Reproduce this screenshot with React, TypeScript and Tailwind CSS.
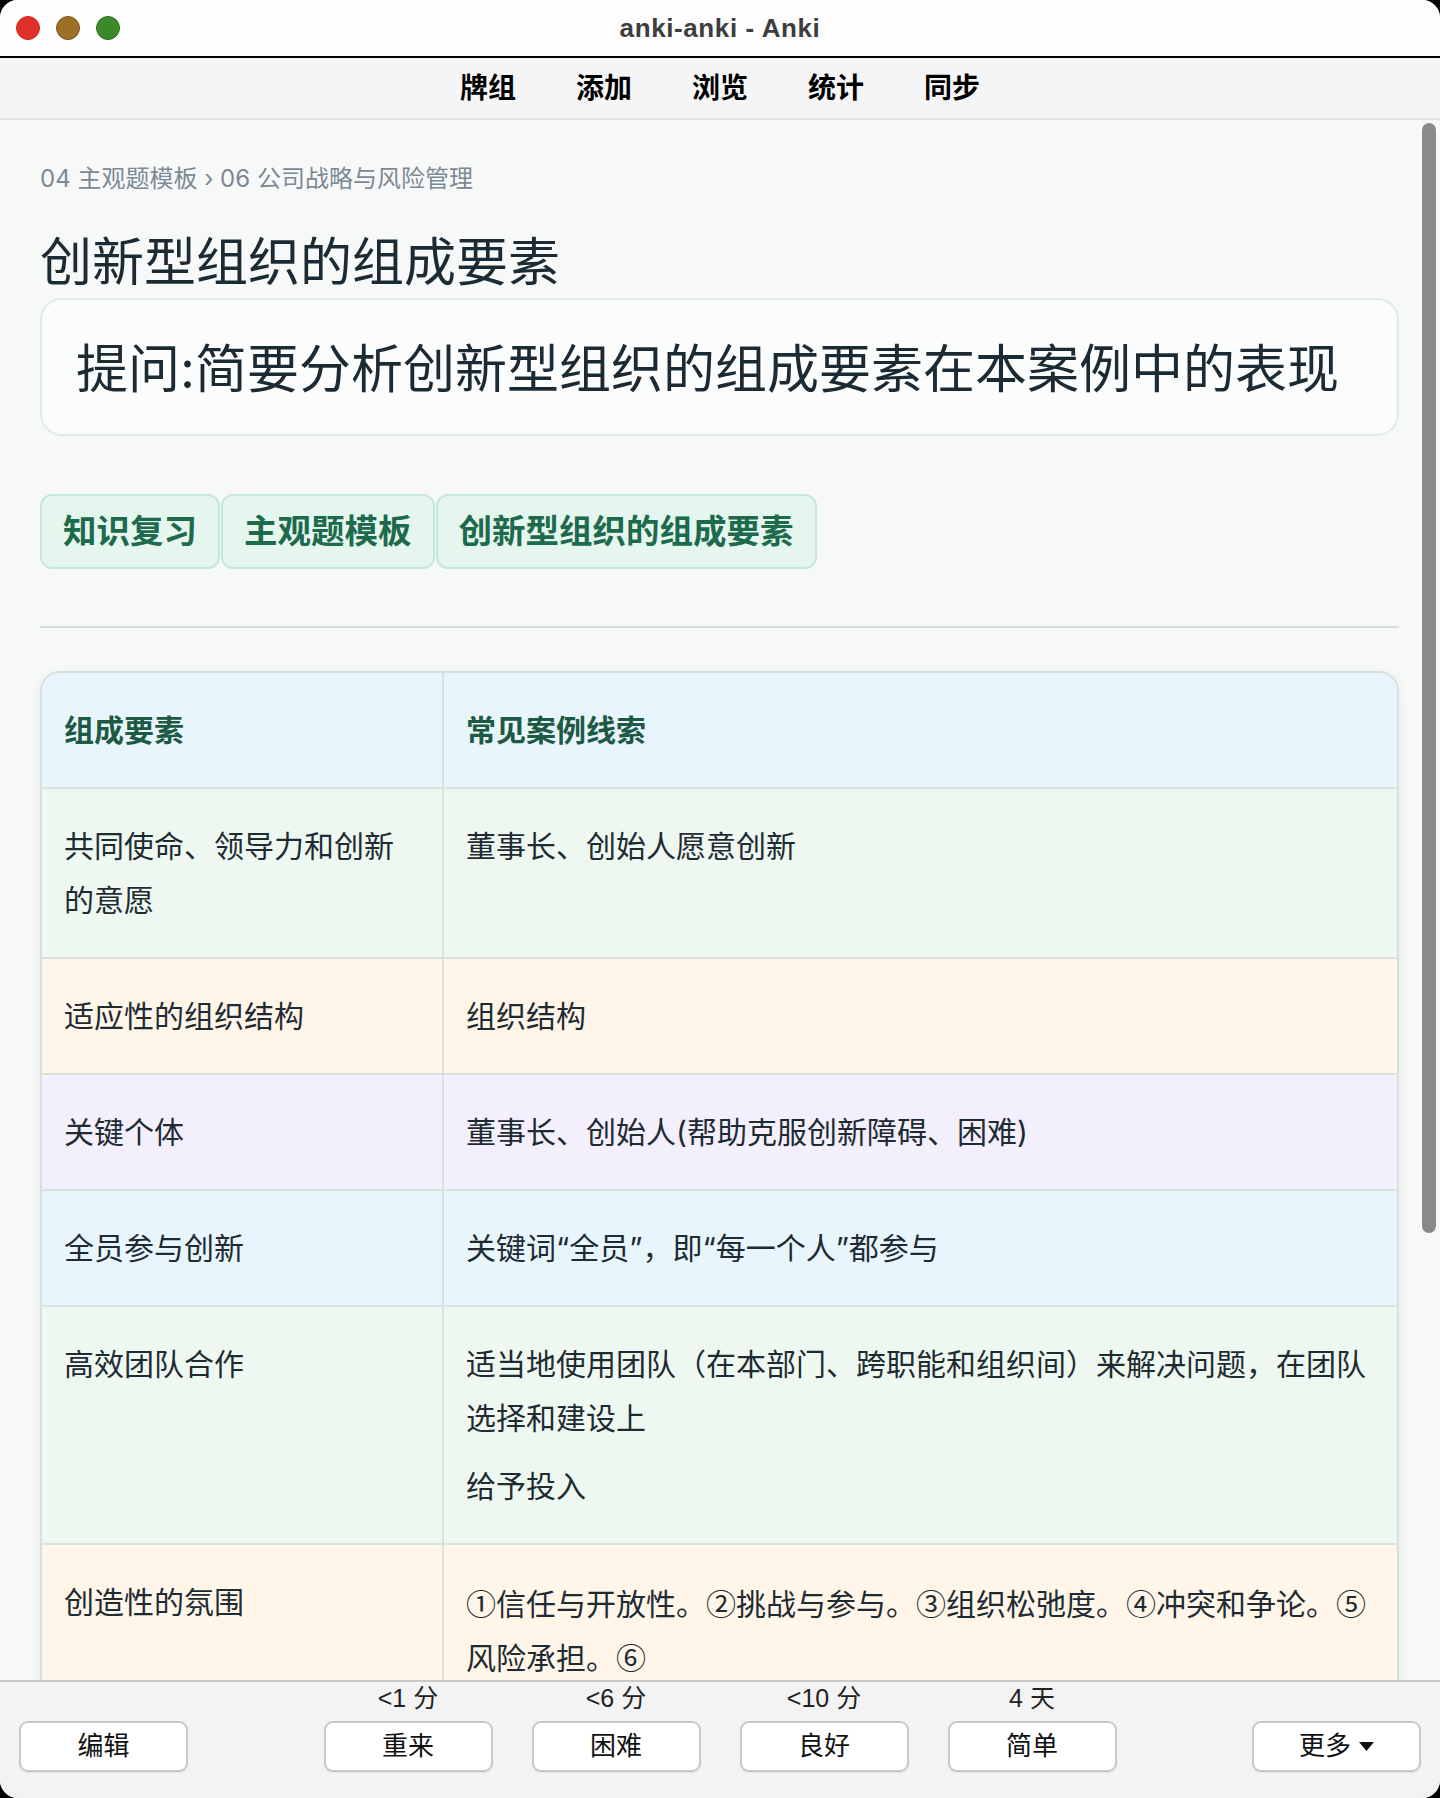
import React from "react";

type Row = {
  bg: string;
  left: string;
  right: React.ReactNode;
  rightClass?: string;
};

const rows: Row[] = [
  { bg: "bg-[#eef8f0]", left: "共同使命、领导力和创新的意愿", right: "董事长、创始人愿意创新" },
  { bg: "bg-[#fff5e8]", left: "适应性的组织结构", right: "组织结构" },
  { bg: "bg-[#f3effd]", left: "关键个体", right: "董事长、创始人(帮助克服创新障碍、困难)" },
  { bg: "bg-[#e8f5fd]", left: "全员参与创新", right: "关键词“全员”，即“每一个人”都参与" },
  {
    bg: "bg-[#eef8f0]",
    left: "高效团队合作",
    right: (
      <>
        <div>适当地使用团队（在本部门、跨职能和组织间）来解决问题，在团队选择和建设上</div>
        <div className="mt-[14px]">给予投入</div>
      </>
    ),
  },
  {
    bg: "bg-[#fff5e8]",
    left: "创造性的氛围",
    right: "①信任与开放性。②挑战与参与。③组织松弛度。④冲突和争论。⑤风险承担。⑥",
    rightClass: "font-[family-name:'Noto_Sans_CJK_SC',sans-serif]",
  },
];

const answers = [
  { time: "<1 分", label: "重来" },
  { time: "<6 分", label: "困难" },
  { time: "<10 分", label: "良好" },
  { time: "4 天", label: "简单" },
];

function BarButton({ children }: { children: React.ReactNode }) {
  return (
    <button className="w-[169px] h-[51px] rounded-[9px] border-2 border-[#c9c9c9] bg-white text-[26px] text-[#111] flex items-center justify-center shadow-[0_1px_1px_rgba(0,0,0,0.06)]">
      {children}
    </button>
  );
}

export default function App() {
  return (
    <div className="w-[1440px] h-[1798px] bg-black font-[family-name:'Inter','Noto_Sans_CJK_SC',sans-serif]">
      <div className="w-full h-full rounded-[18px] overflow-hidden flex flex-col bg-[#f7f9f8]">
        {/* window title bar */}
        <div className="h-[56px] shrink-0 bg-[#fdfdfd] relative flex items-center justify-center">
          <div className="absolute left-[16px] top-[16px] flex gap-[16px]">
            <span className="block w-[24px] h-[24px] rounded-full bg-[#e0302a] border border-[#c22a22]" />
            <span className="block w-[24px] h-[24px] rounded-full bg-[#9b7126] border border-[#7a561d]" />
            <span className="block w-[24px] h-[24px] rounded-full bg-[#3b8a2a] border border-[#2c6c1f]" />
          </div>
          <span className="text-[26px] font-bold tracking-[0.6px] text-[#3d3d3d] font-[family-name:'Liberation_Sans',sans-serif]">
            anki-anki - Anki
          </span>
        </div>
        <div className="h-[2px] shrink-0 bg-black" />

        {/* main toolbar */}
        <div className="h-[62px] shrink-0 bg-[#f5f5f5] border-b-2 border-[#e3e3e3] pb-[4px] flex items-center justify-center gap-[60px] text-[28px] font-bold text-black font-[family-name:'Noto_Sans_CJK_SC',sans-serif]">
          <span>牌组</span>
          <span>添加</span>
          <span>浏览</span>
          <span>统计</span>
          <span>同步</span>
        </div>

        {/* card content */}
        <div className="flex-1 relative overflow-hidden">
          <div className="pl-[40px] pr-[41px] pt-[43px] text-[#1e2b33]">
            <div className="text-[24px] leading-[32px] text-[#7b8995]">
              04 主观题模板 › 06 公司战略与风险管理
            </div>
            <div className="mt-[38px] text-[52px] leading-[60px] text-[#1c2a33]">创新型组织的组成要素</div>
            <div className="mt-[5px] rounded-[22px] border-2 border-[#e2eae7] bg-[#fbfcfc] pl-[34px] pt-[40px] pb-[34px] text-[52px] leading-[60px] text-[#1c2a33]">
              提问:简要分析创新型组织的组成要素在本案例中的表现
            </div>

            <div className="mt-[58px] flex gap-[1px]">
              {["知识复习", "主观题模板", "创新型组织的组成要素"].map((t) => (
                <span
                  key={t}
                  className="rounded-[12px] border-2 border-[#c6e8da] bg-[#e5f6ef] px-[21px] py-[13px] text-[33.5px] leading-[45px] font-bold text-[#1d6a4c]"
                >
                  {t}
                </span>
              ))}
            </div>

            <div className="mt-[57px] h-[2px] bg-[#d5dcd9]" />

            <div className="mt-[43px] rounded-[20px] border-2 border-[#d6e1dc] overflow-hidden shadow-[0_2px_12px_rgba(0,0,0,0.06)] text-[30px] leading-[54px]">
              <div className="grid grid-cols-[400px_1fr] bg-[#e8f5fd] font-bold text-[#1d5943]">
                <div className="px-[22px] py-[30px]">组成要素</div>
                <div className="px-[22px] py-[30px] border-l-2 border-[#d9e3de]">常见案例线索</div>
              </div>
              {rows.map((r, i) => (
                <div key={i} className={`grid grid-cols-[400px_1fr] border-t-2 border-[#d9e3de] ${r.bg}`}>
                  <div className="px-[22px] py-[30px]">{r.left}</div>
                  <div className={`px-[22px] py-[30px] border-l-2 border-[#d9e3de] ${r.rightClass ?? ""}`}>
                    {r.right}
                  </div>
                </div>
              ))}
            </div>
          </div>

          {/* scrollbar thumb */}
          <div className="absolute right-[4px] top-[3px] w-[14px] h-[1110px] rounded-full bg-[#898989]" />
        </div>

        {/* answer bar */}
        <div className="h-[118px] shrink-0 border-t-2 border-[#c9c9c9] bg-[#f3f3f3] flex items-end justify-between px-[19px] pb-[26px] font-[family-name:'Liberation_Sans','Noto_Sans_CJK_SC',sans-serif]">
          <BarButton>编辑</BarButton>
          <div className="flex gap-[39px]">
            {answers.map((a) => (
              <div key={a.label} className="w-[169px] flex flex-col items-center">
                <div className="text-[25px] leading-[30px] text-[#222]">{a.time}</div>
                <div className="mt-[8px]">
                  <button className="w-[169px] h-[51px] rounded-[9px] border-2 border-[#c9c9c9] bg-white text-[26px] text-[#111] flex items-center justify-center shadow-[0_1px_1px_rgba(0,0,0,0.06)]">
                    {a.label}
                  </button>
                </div>
              </div>
            ))}
          </div>
          <BarButton>
            <span>更多</span>
            <svg width="15" height="9" viewBox="0 0 15 9" className="ml-[8px]">
              <path d="M0 0 L15 0 L7.5 9 Z" fill="#111" />
            </svg>
          </BarButton>
        </div>
      </div>
    </div>
  );
}
